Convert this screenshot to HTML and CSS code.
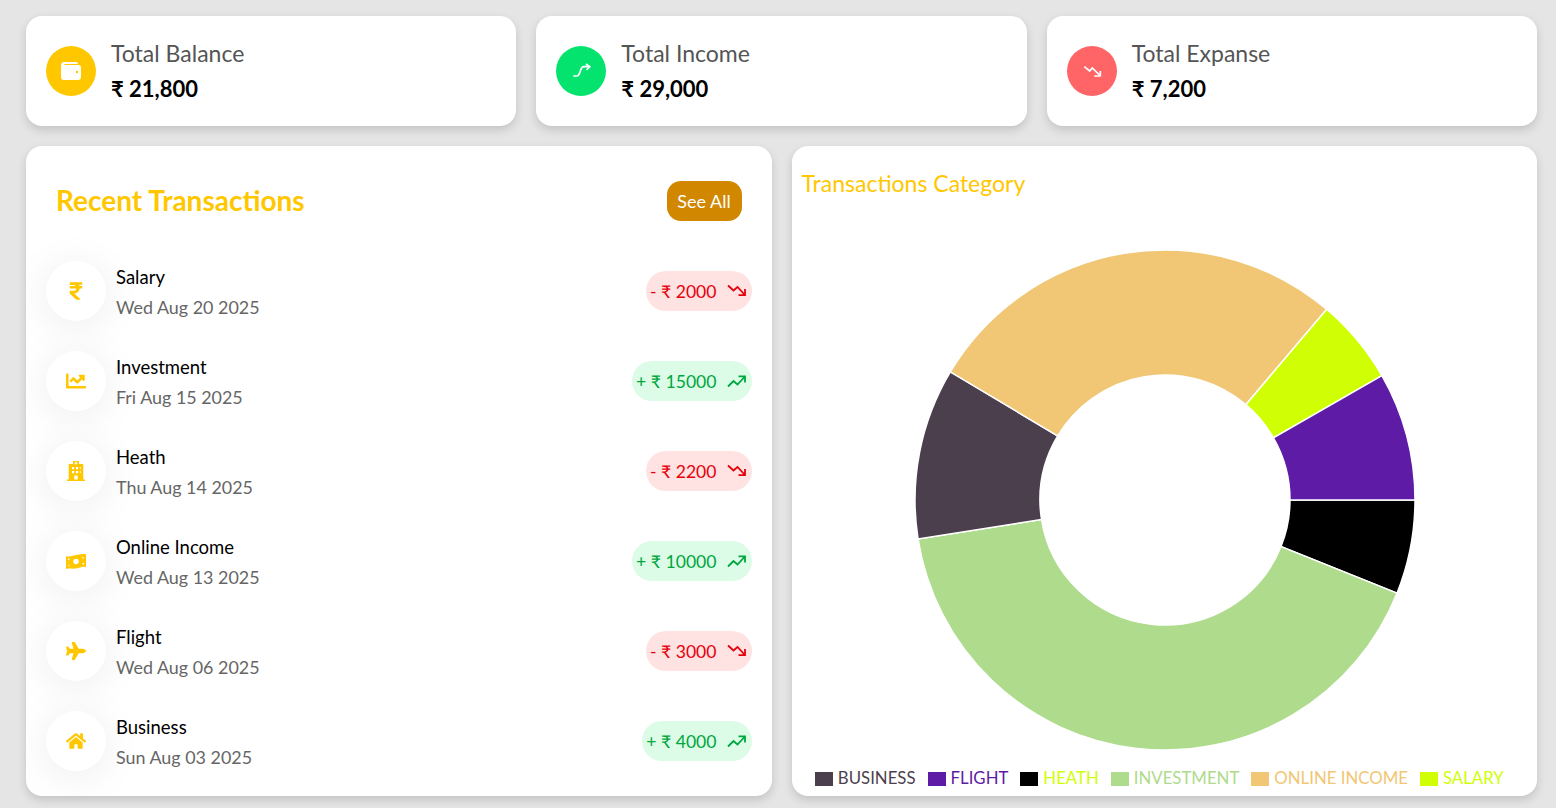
FILE: index.html
```html
<!DOCTYPE html>
<html lang="en">
<head>
    <meta charset="UTF-8">
    <meta name="viewport" content="width=device-width, initial-scale=1.0">
    <title>Dashboard</title>
    <link rel="stylesheet" href="styles.css">
</head>
<body>
    <svg class="sprites" width="0" height="0">
        <symbol id="trend-up" viewBox="0 0 20 18"><path d="M1 14.500l5.500-5.500 4 3.500L17.500 5M11.500 4.300h6.500v6.200"/></symbol>
        <symbol id="trend-down" viewBox="0 0 20 18"><path d="M1 3.500l5.500 5 4-3.500 7 7.500M18 7v6.200h-6.500"/></symbol>
    </svg>

    <div class="summary">
        <div class="stat-card">
            <div class="stat-icon balance">
                <svg viewBox="0 0 20 18" width="20" height="18"><path fill-rule="evenodd" d="M3.500 0h11.500a2 2 0 0 1 2 2H3.500a1.500 1.500 0 0 0 0 1H17.500a2.500 2.500 0 0 1 2.500 2.500V15a3 3 0 0 1-3 3H3a3 3 0 0 1-3-3V3a3 3 0 0 1 3.500-3zM16 8.800a1.200 1.200 0 1 0 0 2.400 1.200 1.200 0 0 0 0-2.400z"/></svg>
            </div>
            <div>
                <div class="stat-title">Total Balance</div>
                <div class="stat-value">₹ 21,800</div>
            </div>
        </div>
        <div class="stat-card">
            <div class="stat-icon income">
                <svg viewBox="0 0 20 16" width="20" height="16"><path class="line" d="M2.300 13H6c1.500 0 2.200-1.500 3-4 .8-3 1.500-5.300 4-5.300h5.500M15 1l3.800 2.700L15.500 7"/></svg>
            </div>
            <div>
                <div class="stat-title">Total Income</div>
                <div class="stat-value">₹ 29,000</div>
            </div>
        </div>
        <div class="stat-card">
            <div class="stat-icon expense">
                <svg viewBox="0 0 20 16" width="20" height="16"><path class="line" d="M2.300 3.700L7.700 8l2.600-3L18 12.500M18.300 8v5h-6"/></svg>
            </div>
            <div>
                <div class="stat-title">Total Expanse</div>
                <div class="stat-value">₹ 7,200</div>
            </div>
        </div>
    </div>

    <div class="panels">
        <div class="panel transactions">
            <div class="panel-head">
                <h2>Recent Transactions</h2>
                <button class="see-all">See All</button>
            </div>

            <div class="tx-row">
                <div class="tx-icon"><svg viewBox="0 0 320 512" width="14" height="20"><path d="M308 96c6.627 0 12-5.373 12-12V44c0-6.627-5.373-12-12-12H12C5.373 32 0 37.373 0 44v44.748c0 6.627 5.373 12 12 12h85.280c27.308 0 48.261 9.958 60.970 27.252H12c-6.627 0-12 5.373-12 12v40c0 6.627 5.373 12 12 12h158.757c-6.217 36.086-32.961 58.632-74.757 58.632H12c-6.627 0-12 5.373-12 12v53.012c0 3.349 1.400 6.546 3.861 8.818l165.052 152.356a12.001 12.001 0 0 0 8.139 3.182h82.562c10.924 0 16.166-13.408 8.139-20.818L116.871 319.906c76.499-2.340 131.144-53.395 138.318-127.906H308c6.627 0 12-5.373 12-12v-40c0-6.627-5.373-12-12-12h-58.690c-3.486-11.541-8.280-22.246-14.252-32H308z"/></svg></div>
                <div class="tx-text">
                    <div class="tx-name">Salary</div>
                    <div class="tx-date">Wed Aug 20 2025</div>
                </div>
                <div class="pill out">- ₹ 2000 <svg class="pill-icon"><use href="#trend-down"/></svg></div>
            </div>

            <div class="tx-row">
                <div class="tx-icon"><svg viewBox="0 0 512 512" width="20" height="20"><path d="M496 384H64V80c0-8.840-7.160-16-16-16H16C7.160 64 0 71.160 0 80v336c0 17.670 14.330 32 32 32h464c8.840 0 16-7.160 16-16v-32c0-8.840-7.160-16-16-16zM464 96H345.940c-21.380 0-32.090 25.850-16.970 40.970l32.400 32.400L288 242.750l-73.370-73.370c-12.500-12.500-32.760-12.500-45.250 0l-68.690 68.690c-6.250 6.250-6.250 16.380 0 22.630l22.620 22.620c6.250 6.250 16.380 6.250 22.630 0L192 237.250l73.370 73.370c12.500 12.500 32.760 12.500 45.250 0l96-96 32.400 32.400c15.120 15.120 40.970 4.410 40.970-16.970V112c.010-8.840-7.150-16-16-16z"/></svg></div>
                <div class="tx-text">
                    <div class="tx-name">Investment</div>
                    <div class="tx-date">Fri Aug 15 2025</div>
                </div>
                <div class="pill in">+ ₹ 15000 <svg class="pill-icon"><use href="#trend-up"/></svg></div>
            </div>

            <div class="tx-row">
                <div class="tx-icon"><svg viewBox="0 0 18 20" width="18" height="20"><path fill-rule="evenodd" d="M6 0h6v3h3.500a.8.800 0 0 1 .8.800V18.500H18V20H0v-1.500h1.700V3.800a.8.800 0 0 1 .8-.800H6zM8.400.8v.9h-.9v1h.9v.9h1.200v-.9h.9v-1h-.9V.8zM5 6v2.200h2.200V6zm3.900 0v2.200h2.200V6zM5 10v2.200h2.200V10zm3.900 0v2.200h2.200V10zM12.800 6v2.200h.9V6zm0 4v2.200h.9V10zM7.300 14.500v4h3.400v-4z"/></svg></div>
                <div class="tx-text">
                    <div class="tx-name">Heath</div>
                    <div class="tx-date">Thu Aug 14 2025</div>
                </div>
                <div class="pill out">- ₹ 2200 <svg class="pill-icon"><use href="#trend-down"/></svg></div>
            </div>

            <div class="tx-row">
                <div class="tx-icon"><svg viewBox="0 0 20 15" width="20" height="15"><path fill-rule="evenodd" d="M0 2c4 1.500 6-.500 10-1s6-1.500 10-1v13c-4-1-6 1-10 1.500S4 14 0 15zM10 4.800a2.700 2.700 0 1 0 0 5.400 2.700 2.700 0 0 0 0-5.400zM2 4.300v1.800h1.700c0-.9-.7-1.600-1.700-1.800zm16 6.400V8.900h-1.700c0 .9.700 1.600 1.700 1.800zM2 11.700c1 0 1.700.300 2 1 0-1-.800-2-2-2zM18 3.500c-1 0-1.700-.300-2-.800 0 1 .800 1.800 2 1.800z"/></svg></div>
                <div class="tx-text">
                    <div class="tx-name">Online Income</div>
                    <div class="tx-date">Wed Aug 13 2025</div>
                </div>
                <div class="pill in">+ ₹ 10000 <svg class="pill-icon"><use href="#trend-up"/></svg></div>
            </div>

            <div class="tx-row">
                <div class="tx-icon"><svg viewBox="0 0 576 512" width="20" height="18"><path d="M480 192H365.710L260.610 8.060A16.014 16.014 0 0 0 246.710 0h-65.500c-10.630 0-18.300 10.170-15.380 20.390L214.860 192H112l-43.200-57.600c-3.020-4.030-7.770-6.400-12.800-6.400H16.010C5.600 128-2.040 137.780.490 147.880L32 256 .490 364.120C-2.040 374.220 5.600 384 16.010 384H56c5.040 0 9.780-2.370 12.800-6.400L112 320h102.860l-49.030 171.600c-2.920 10.220 4.750 20.400 15.380 20.400h65.500c5.740 0 11.040-3.080 13.890-8.060L365.710 320H480c35.350 0 96-28.650 96-64s-60.650-64-96-64z"/></svg></div>
                <div class="tx-text">
                    <div class="tx-name">Flight</div>
                    <div class="tx-date">Wed Aug 06 2025</div>
                </div>
                <div class="pill out">- ₹ 3000 <svg class="pill-icon"><use href="#trend-down"/></svg></div>
            </div>

            <div class="tx-row">
                <div class="tx-icon"><svg viewBox="0 0 576 512" width="20" height="18"><path d="M280.370 148.260L96 300.110V464a16 16 0 0 0 16 16l112.060-.29a16 16 0 0 0 15.920-16V368a16 16 0 0 1 16-16h64a16 16 0 0 1 16 16v95.640a16 16 0 0 0 16 16.050L464 480a16 16 0 0 0 16-16V300L295.670 148.260a12.190 12.190 0 0 0-15.300 0zM571.600 251.470L488 182.560V44.050a12 12 0 0 0-12-12h-56a12 12 0 0 0-12 12v72.610L318.470 43a48 48 0 0 0-61 0L4.340 251.470a12 12 0 0 0-1.600 16.900l25.500 31A12 12 0 0 0 45.150 301l235.220-193.740a12.190 12.190 0 0 1 15.300 0L530.900 301a12 12 0 0 0 16.900-1.600l25.500-31a12 12 0 0 0-1.700-16.930z"/></svg></div>
                <div class="tx-text">
                    <div class="tx-name">Business</div>
                    <div class="tx-date">Sun Aug 03 2025</div>
                </div>
                <div class="pill in">+ ₹ 4000 <svg class="pill-icon"><use href="#trend-up"/></svg></div>
            </div>
        </div>

        <div class="panel category">
            <div class="category-title">Transactions Category</div>
            <svg class="donut" viewBox="-251 -251 502 502" width="502" height="502">
                <g stroke="#fff" stroke-width="1.5">
                    <path fill="#000000" d="M250 0A250 250 0 0 1 231.990 93.170L116 46.590A125 125 0 0 0 125 0Z"/>
                    <path fill="#aedb8c" d="M231.990 93.170A250 250 0 0 1 -246.960 38.900L-123.480 19.450A125 125 0 0 0 116 46.590Z"/>
                    <path fill="#4c3f4d" d="M-246.960 38.900A250 250 0 0 1 -214.660 -128.150L-107.330 -64.070A125 125 0 0 0 -123.480 19.450Z"/>
                    <path fill="#f1c674" d="M-214.660 -128.150A250 250 0 0 1 161.660 -190.700L80.830 -95.350A125 125 0 0 0 -107.330 -64.070Z"/>
                    <path fill="#d0ff05" d="M161.660 -190.700A250 250 0 0 1 216.890 -124.340L108.440 -62.170A125 125 0 0 0 80.830 -95.350Z"/>
                    <path fill="#5e1ba5" d="M216.890 -124.340A250 250 0 0 1 250 0L125 0A125 125 0 0 0 108.440 -62.170Z"/>
                </g>
            </svg>
            <div class="legend">
                <span class="legend-item business"><i></i>BUSINESS</span>
                <span class="legend-item flight"><i></i>FLIGHT</span>
                <span class="legend-item heath"><i></i>HEATH</span>
                <span class="legend-item investment"><i></i>INVESTMENT</span>
                <span class="legend-item online"><i></i>ONLINE INCOME</span>
                <span class="legend-item salary"><i></i>SALARY</span>
            </div>
        </div>
    </div>
</body>
</html>
```

FILE: styles.css
```css
* {
    margin: 0;
    padding: 0;
    box-sizing: border-box;
}

body {
    font-family: Lato, "Open Sans", sans-serif;
    background-color: #e5e5e5;
    padding: 16px 19px 12px 26px;
    height: 808px;
    overflow: hidden;
}

.sprites {
    display: block;
    height: 0;
}

/* Top cards */
.summary {
    display: grid;
    grid-template-columns: repeat(3, 1fr);
    gap: 20px;
}

.stat-card {
    height: 110px;
    display: flex;
    align-items: center;
    gap: 15px;
    padding: 0 20px;
    background-color: #fff;
    border-radius: 16px;
    box-shadow: 0 4px 10px rgba(0, 0, 0, 0.15);
}

.stat-icon {
    width: 50px;
    height: 50px;
    border-radius: 50%;
    display: flex;
    align-items: center;
    justify-content: center;
    flex-shrink: 0;
    fill: #fff;
}

.stat-icon.balance { background-color: #ffc700; }
.stat-icon.income { background-color: #05e36f; }
.stat-icon.expense { background-color: #ff6467; }

.line {
    fill: none;
    stroke: #fff;
    stroke-width: 1.700;
}

.stat-title {
    margin-top: 2px;
    font-size: 23px;
    line-height: 30px;
    color: #555;
}

.stat-value {
    margin-top: 4px;
    font-size: 22px;
    line-height: 34px;
    font-weight: 700;
    color: #000;
}

/* Lower panels */
.panels {
    display: grid;
    grid-template-columns: 1fr 1fr;
    gap: 20px;
    margin-top: 20px;
    height: 650px;
}

.panel {
    background-color: #fff;
    border-radius: 16px;
    box-shadow: 0 4px 10px rgba(0, 0, 0, 0.15);
}

.transactions {
    padding: 35px 20px 0;
    overflow: hidden;
}

.panel-head {
    display: flex;
    align-items: center;
    justify-content: space-between;
    padding: 0 10px;
    margin-bottom: 40px;
}

.panel-head h2 {
    margin-bottom: 2px;
    font-size: 28px;
    font-weight: 700;
    color: #ffc700;
}

.see-all {
    width: 75px;
    height: 40px;
    border: none;
    border-radius: 14px;
    background-color: #d18700;
    color: #fff;
    font-family: inherit;
    font-size: 18px;
}

.tx-row {
    display: flex;
    align-items: center;
    height: 60px;
    margin-bottom: 30px;
}

.tx-row:last-child {
    margin-bottom: 0;
}

.tx-icon {
    width: 60px;
    height: 60px;
    border-radius: 50%;
    background-color: #fff;
    display: flex;
    align-items: center;
    justify-content: center;
    flex-shrink: 0;
    fill: #ffc700;
    box-shadow: 0 5px 40px rgba(0, 0, 0, 0.08);
}

.tx-text {
    margin-left: 10px;
    padding-top: 2px;
    flex: 1;
}

.tx-name {
    font-size: 18.500px;
    line-height: 30px;
    color: #000;
}

.tx-date {
    font-size: 17.900px;
    line-height: 30px;
    color: #666;
}

.pill {
    height: 40px;
    display: flex;
    align-items: center;
    gap: 10px;
    padding: 0 5px 0 4px;
    border-radius: 20px;
    font-size: 17.600px;
}

.pill.out {
    background-color: #ffe2e2;
    color: #e7000b;
    stroke: #e7000b;
}

.pill.in {
    background-color: #dcfce7;
    color: #00a63e;
    stroke: #00a63e;
}

.pill-icon {
    width: 20px;
    height: 18px;
    fill: none;
    stroke-width: 1.800;
}

/* Chart panel */
.category {
    padding: 23px 8px 0 10px;
}

.category-title {
    font-size: 23px;
    line-height: 28px;
    color: #ffc700;
}

.donut {
    display: block;
    margin: 52px auto 0;
}

.legend {
    display: flex;
    justify-content: center;
    gap: 12px;
    margin-top: 16px;
    padding-right: 12px;
    font-size: 16.800px;
    line-height: 22px;
}

.legend-item {
    display: flex;
    align-items: center;
    gap: 5px;
}

.legend-item i {
    width: 18px;
    height: 14px;
    margin-top: 2px;
}

.business { color: #4c3f4d; }
.business i { background-color: #4c3f4d; }
.flight { color: #5e1ba5; }
.flight i { background-color: #5e1ba5; }
.heath { color: #d0ff05; }
.heath i { background-color: #000; }
.investment { color: #aedb8c; }
.investment i { background-color: #aedb8c; }
.online { color: #f1c674; }
.online i { background-color: #f1c674; }
.salary { color: #d0ff05; }
.salary i { background-color: #d0ff05; }
```
